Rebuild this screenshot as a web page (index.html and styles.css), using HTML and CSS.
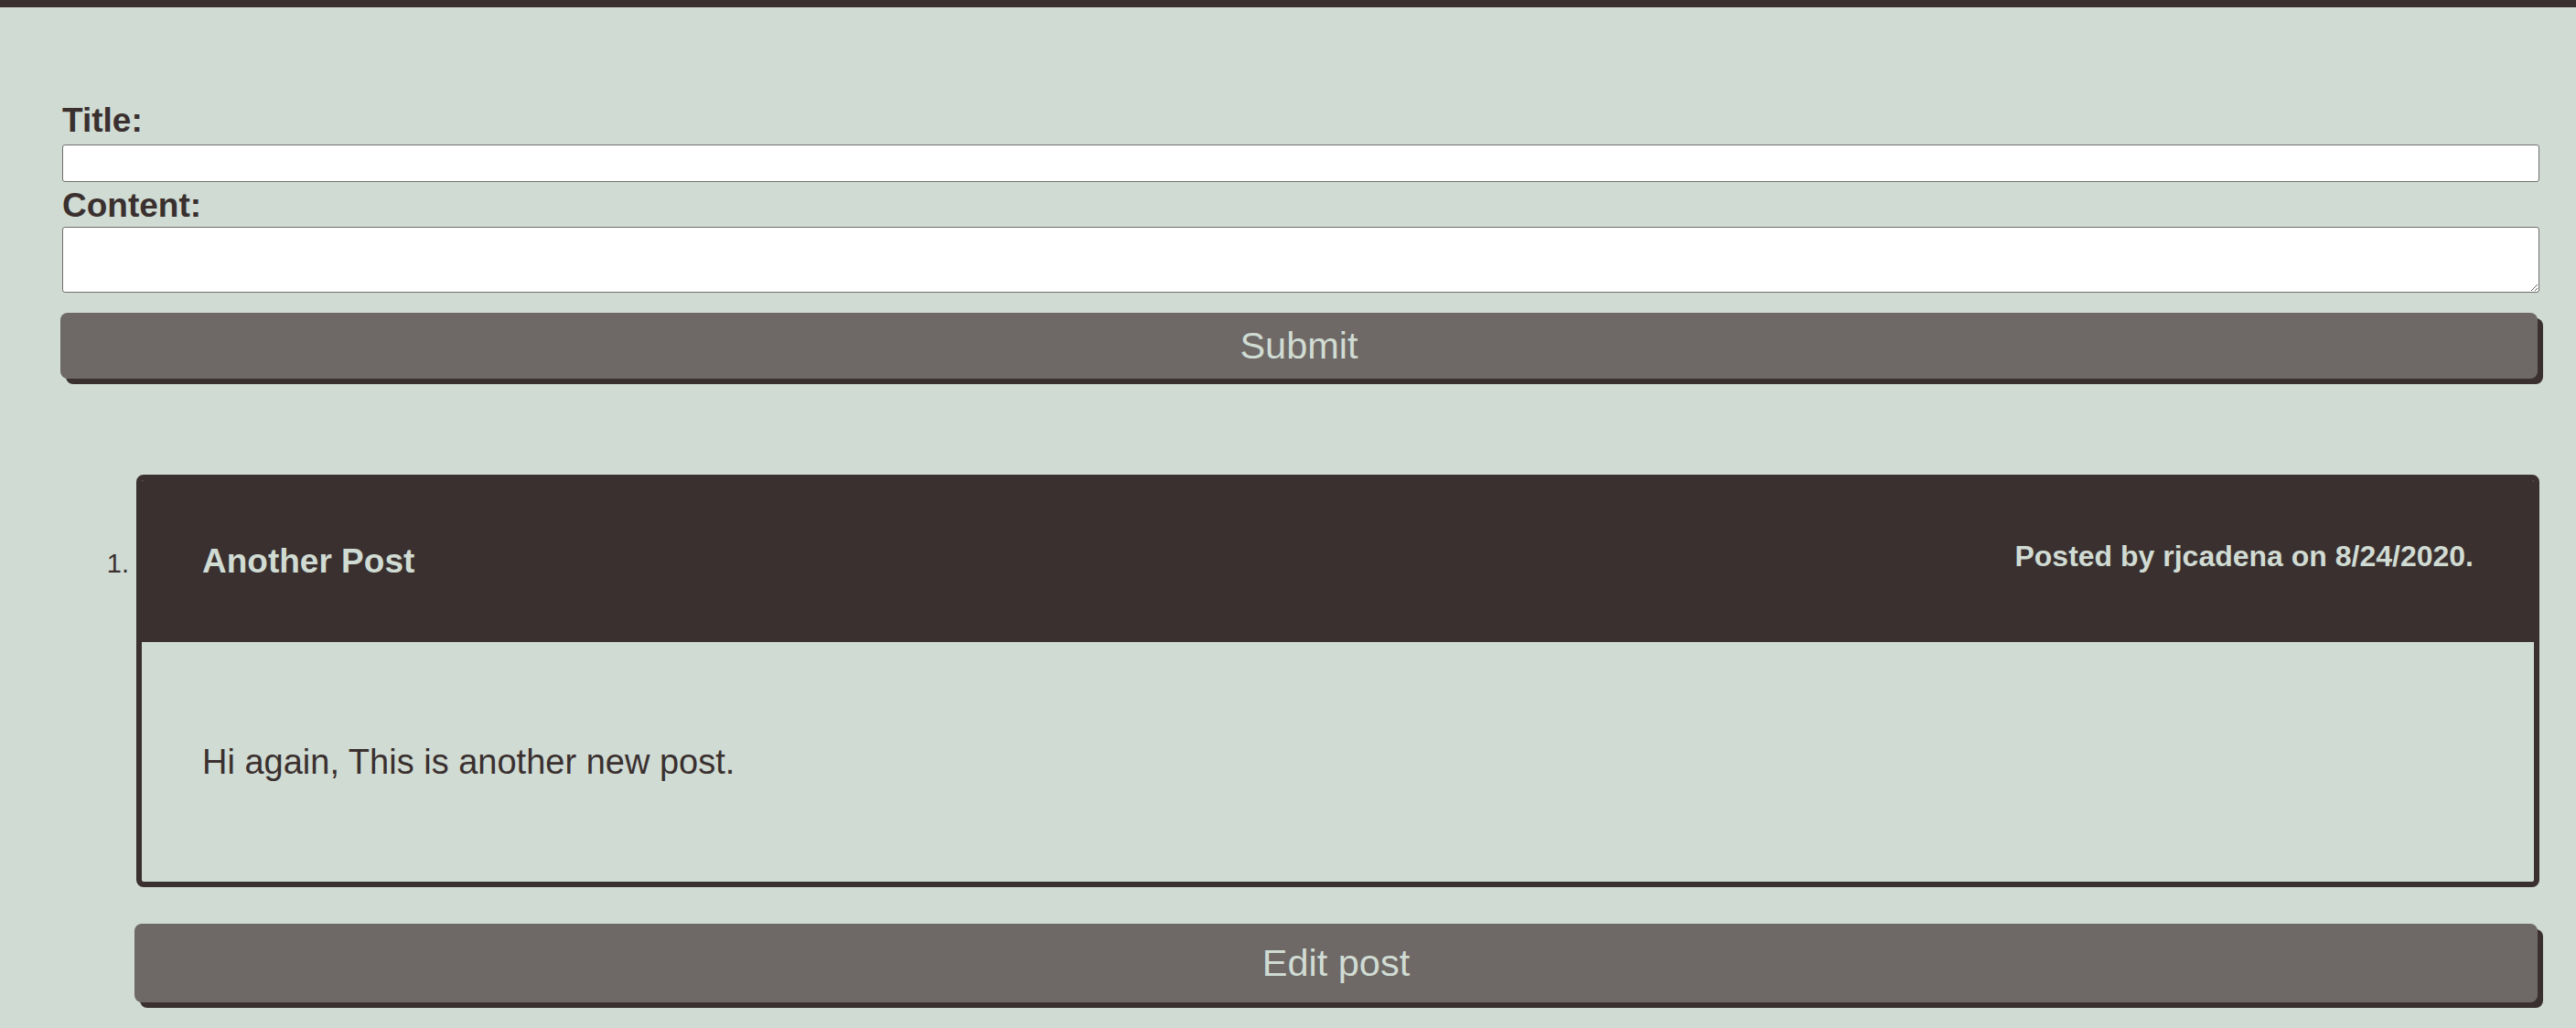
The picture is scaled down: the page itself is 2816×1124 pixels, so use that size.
FILE: index.html
```html
<!DOCTYPE html>
<html lang="en">
<head>
<meta charset="utf-8">
<title>Posts</title>
<link rel="stylesheet" href="styles.css">
</head>
<body>
<div class="topbar"></div>
<main class="page">
  <form class="post-form">
    <label class="field-label" for="title">Title:</label>
    <input id="title" class="text-input" type="text">
    <label class="field-label field-label--content" for="content">Content:</label>
    <textarea id="content" class="text-area"></textarea>
    <button type="button" class="btn btn--submit">Submit</button>
  </form>
  <ol class="post-list">
    <li class="post-item">
      <article class="post-card">
        <header class="post-header">
          <h2 class="post-title">Another Post</h2>
          <p class="post-meta">Posted by rjcadena on 8/24/2020.</p>
        </header>
        <div class="post-body">
          <p class="post-text">Hi again, This is another new post.</p>
        </div>
      </article>
      <button type="button" class="btn btn--edit">Edit post</button>
    </li>
  </ol>
</main>
</body>
</html>
```
FILE: styles.css
```css
html, body {
  margin: 0;
  padding: 0;
  background: #d0dbd3;
}

body {
  font-family: "Liberation Sans", Arial, Helvetica, sans-serif;
  color: #3a302f;
}

.topbar {
  height: 8px;
  background: #3a302f;
}

.page {
  padding: 103px 40px 40px 68px;
}

.post-form {
  display: flex;
  flex-direction: column;
}

.field-label {
  font-size: 37px;
  line-height: 42px;
  font-weight: bold;
  color: #3a302f;
  margin-bottom: 5px;
}

.field-label--content {
  margin-bottom: 2px;
}

.text-input,
.text-area {
  display: block;
  box-sizing: border-box;
  width: 100%;
  margin: 0;
  background: #fff;
  border: 1px solid #6f6f6f;
  border-radius: 3px;
  font-family: "Liberation Sans", Arial, sans-serif;
  font-size: 20px;
}

.text-input {
  height: 41px;
  margin-bottom: 5px;
}

.text-area {
  height: 72px;
}

.btn {
  display: block;
  box-sizing: border-box;
  width: 100%;
  margin: 0 0 0 -2px;
  border: none;
  border-radius: 8px;
  background: #6e6966;
  color: #d0dbd3;
  box-shadow: 6px 6px 0 #3a302f;
  font-family: "Liberation Sans", Arial, Helvetica, sans-serif;
  font-size: 41.5px;
  padding: 0;
  cursor: pointer;
}

.btn--submit {
  height: 72px;
  margin-top: 22px;
}

.post-list {
  margin: 105px 0 0 0;
  padding-left: 81px;
}

.post-item {
  font-size: 29px;
  color: #3a302f;
}

.post-card {
  border: 6px solid #3a302f;
  border-radius: 8px;
  overflow: hidden;
}

.post-header {
  height: 177px;
  box-sizing: border-box;
  padding: 0 66px;
  background: #3a302f;
  color: #d0dbd3;
  display: flex;
  justify-content: space-between;
  align-items: center;
}

.post-title {
  margin: 0;
  font-size: 37px;
  line-height: 42px;
  font-weight: bold;
}

.post-meta {
  margin: 0 0 11px 0;
  font-size: 32px;
  line-height: 37px;
  font-weight: bold;
}

.post-body {
  padding: 110px 66px;
}

.post-text {
  margin: 0;
  font-size: 38px;
  line-height: 42px;
  color: #3a302f;
}

.btn--edit {
  height: 86px;
  margin-top: 40px;
}
```
